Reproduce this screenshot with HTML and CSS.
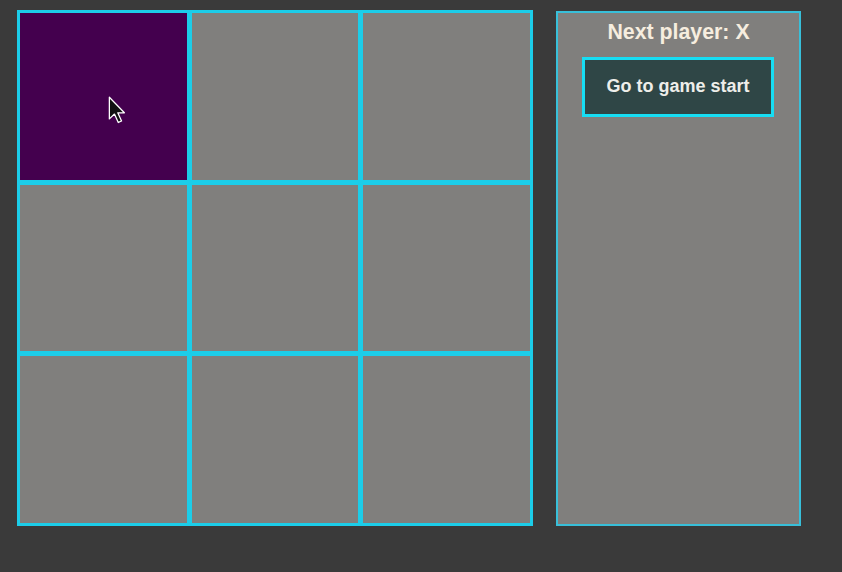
FILE: index.html
```html
<!DOCTYPE html>
<html lang="en">
<head>
<meta charset="utf-8">
<title>Tic-tac-toe</title>
<link rel="stylesheet" href="styles.css">
</head>
<body>
<div class="game">
  <div class="board">
    <button class="square square-hover">
      <svg class="cursor" width="18" height="28" viewBox="0 0 14 22" aria-hidden="true">
        <path d="M1 1 L1 18 L5 14.2 L8 20.8 L10.6 19.6 L7.6 13.2 L12.8 13.2 Z" fill="#111" stroke="#fff" stroke-width="1" stroke-linejoin="round"/>
      </svg>
    </button>
    <button class="square"></button>
    <button class="square"></button>
    <button class="square"></button>
    <button class="square"></button>
    <button class="square"></button>
    <button class="square"></button>
    <button class="square"></button>
    <button class="square"></button>
  </div>
  <div class="info">
    <div class="status">Next player: X</div>
    <button class="history-btn">Go to game start</button>
  </div>
</div>
</body>
</html>
```

FILE: styles.css
```css
html, body {
  margin: 0;
  padding: 0;
  background: #3a3a3a;
  font-family: "Liberation Sans", Arial, sans-serif;
}

.game {
  display: flex;
  align-items: flex-start;
  gap: 23px;
  padding: 10px 0 0 17px;
}

.board {
  box-sizing: border-box;
  width: 516px;
  height: 516px;
  display: grid;
  grid-template-columns: repeat(3, 1fr);
  grid-template-rows: repeat(3, 1fr);
  gap: 5px;
  border: 3px solid #1ccde9;
  background: #1ccde9;
}

.square {
  position: relative;
  margin: 0;
  padding: 0;
  border: none;
  background: #807f7d;
}

.square-hover {
  background: #44004e;
}

.cursor {
  position: absolute;
  left: 88px;
  top: 83px;
}

.info {
  box-sizing: border-box;
  margin-top: 1px;
  width: 245px;
  height: 515px;
  border: 2px solid #38bfd9;
  background: #807f7d;
  display: flex;
  flex-direction: column;
  align-items: center;
  padding-top: 7px;
}

.status {
  font-size: 21.33px;
  font-weight: bold;
  color: #f6eddf;
  line-height: 24.5px;
}

.history-btn {
  margin-top: 12px;
  margin-right: 1px;
  box-sizing: border-box;
  width: 192px;
  height: 60px;
  border: 3px solid #17ddf3;
  background: #2f4646;
  color: #eeeeea;
  font-family: "Liberation Sans", Arial, sans-serif;
  font-size: 18px;
  font-weight: bold;
  padding: 0;
}
```
